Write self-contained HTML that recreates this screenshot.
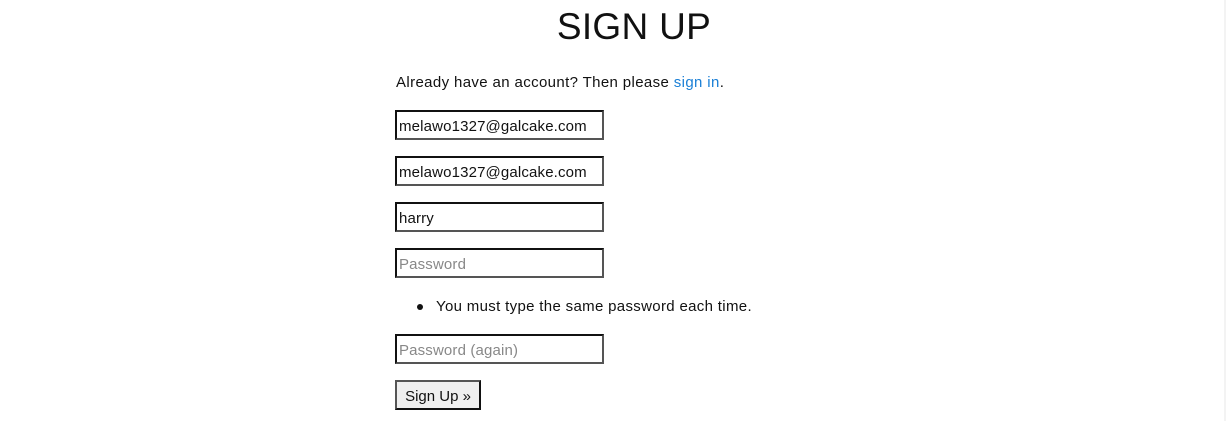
<!DOCTYPE html>
<html><head><meta charset="utf-8"><style>
html,body{margin:0;padding:0;background:#fff;width:1226px;height:421px;overflow:hidden;font-family:"Liberation Sans",sans-serif;color:#111}
h1{position:absolute;left:0;width:1268px;top:6px;margin:0;text-align:center;font-weight:400;font-size:37px;letter-spacing:0.3px}
.t{position:absolute;left:396px;font-size:15px;letter-spacing:0.37px}
a{color:#1a7fd6;text-decoration:none}
.in{position:absolute;left:395px;width:203px;height:26px;border:2px solid;border-color:#111 #555 #555 #111;font-size:15px;line-height:30px;padding-left:2px;box-sizing:content-box;letter-spacing:0.15px;overflow:hidden}
.ph{color:#888}
.btn{position:absolute;left:395px;top:380px;width:82px;height:26px;border:2px solid;border-color:#555 #111 #111 #555;background:#efefef;font-size:15px;line-height:30px;text-align:center}
.dot{position:absolute;left:417px;top:304px;width:6px;height:6px;border-radius:50%;background:#111}
.sb{position:absolute;left:1224px;top:0;width:2px;height:421px;background:#f3f3f3}
</style></head><body>
<h1>SIGN UP</h1>
<div class="t" style="top:74px">Already have an account? Then please <a>sign in</a>.</div>
<div class="in" style="top:110px">melawo1327@galcake.com</div>
<div class="in" style="top:156px">melawo1327@galcake.com</div>
<div class="in" style="top:202px">harry</div>
<div class="in ph" style="top:248px">Password</div>
<div class="dot"></div>
<div class="t" style="left:436px;top:298px;letter-spacing:0.33px">You must type the same password each time.</div>
<div class="in ph" style="top:334px">Password (again)</div>
<div class="btn">Sign Up »</div>
<div class="sb"></div>
</body></html>
